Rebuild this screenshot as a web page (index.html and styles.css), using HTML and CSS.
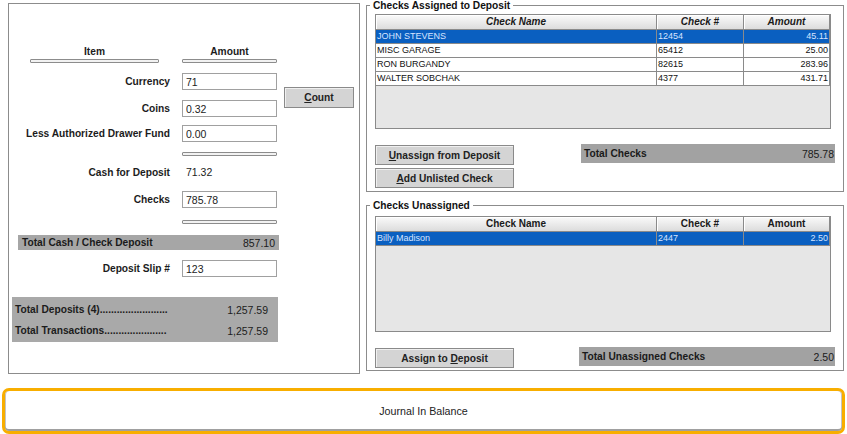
FILE: index.html
```html
<!DOCTYPE html>
<html lang="en">

<head>
    <meta charset="UTF-8">
    <title>Deposit</title>

    <link rel="stylesheet" href="styles.css">
</head>

<body>

    <div class="top">

        <div class="venstre">
            <div class="felt hoved b">
                <span class="item">Item</span>
                <span class="amount">Amount</span>
            </div>
            <div class="felt linjer">
                <div class="streg item"></div>
                <div class="streg amount"></div>
            </div>

            <div class="felt kasse">
                <span class="lbl b">Currency</span>
                <input class="inp" type="text" value="71">
                <span class="lbl b">Coins</span>
                <input class="inp" type="text" value="0.32">
                <button class="knap count"><u>C</u>ount</button>
            </div>

            <div class="felt raekke r-less">
                <span class="lbl b">Less Authorized Drawer Fund</span>
                <input class="inp" type="text" value="0.00">
            </div>
            <div class="felt linjer l2">
                <div class="streg amount"></div>
            </div>
            <div class="felt raekke r-cash">
                <span class="lbl b">Cash for Deposit</span>
                <span class="vaerdi">71.32</span>
            </div>
            <div class="felt raekke r-checks">
                <span class="lbl b">Checks</span>
                <input class="inp" type="text" value="785.78">
            </div>
            <div class="felt linjer l3">
                <div class="streg amount"></div>
            </div>

            <div class="bar total-cash">
                <span class="b">Total Cash / Check Deposit</span>
                <span>857.10</span>
            </div>

            <div class="felt raekke r-slip">
                <span class="lbl b">Deposit Slip #</span>
                <input class="inp" type="text" value="123">
            </div>

            <div class="totaler">
                <div class="tot-linje">
                    <span class="b">Total Deposits (4)........................</span>
                    <span>1,257.59</span>
                </div>
                <div class="tot-linje">
                    <span class="b">Total Transactions......................</span>
                    <span>1,257.59</span>
                </div>
            </div>
        </div>

        <div class="hoejre">
            <fieldset class="gruppe g1">
                <legend>Checks Assigned to Deposit</legend>
                <div class="tabel">
                    <table class="kursiv">
                        <colgroup>
                            <col class="c-navn">
                            <col class="c-nr">
                            <col class="c-bel">
                        </colgroup>
                        <tr>
                            <th>Check Name</th>
                            <th>Check #</th>
                            <th>Amount</th>
                        </tr>
                        <tr class="valgt">
                            <td>JOHN STEVENS</td>
                            <td>12454</td>
                            <td class="bel">45.11</td>
                        </tr>
                        <tr>
                            <td>MISC GARAGE</td>
                            <td>65412</td>
                            <td class="bel">25.00</td>
                        </tr>
                        <tr>
                            <td>RON BURGANDY</td>
                            <td>82615</td>
                            <td class="bel">283.96</td>
                        </tr>
                        <tr>
                            <td>WALTER SOBCHAK</td>
                            <td>4377</td>
                            <td class="bel">431.71</td>
                        </tr>
                    </table>
                </div>
                <div class="bund">
                    <div class="knapper">
                        <button class="knap bred"><u>U</u>nassign from Deposit</button>
                        <button class="knap bred"><u>A</u>dd Unlisted Check</button>
                    </div>
                    <div class="bar total-h">
                        <span class="b">Total Checks</span>
                        <span>785.78</span>
                    </div>
                </div>
            </fieldset>

            <fieldset class="gruppe g2">
                <legend>Checks Unassigned</legend>
                <div class="tabel t2">
                    <table>
                        <colgroup>
                            <col class="c-navn">
                            <col class="c-nr">
                            <col class="c-bel">
                        </colgroup>
                        <tr>
                            <th>Check Name</th>
                            <th>Check #</th>
                            <th>Amount</th>
                        </tr>
                        <tr class="valgt">
                            <td>Billy Madison</td>
                            <td>2447</td>
                            <td class="bel">2.50</td>
                        </tr>
                    </table>
                </div>
                <div class="bund">
                    <div class="knapper">
                        <button class="knap bred">Assign to <u>D</u>eposit</button>
                    </div>
                    <div class="bar total-h t-u">
                        <span class="b">Total Unassigned Checks</span>
                        <span>2.50</span>
                    </div>
                </div>
            </fieldset>
        </div>

    </div>

    <div class="journal">Journal In Balance</div>

</body>

</html>
```

FILE: styles.css
```css
body {
    margin: 0;
    background-color: #fff;
    font-family: "Liberation Sans", Arial, sans-serif;
    font-size: 10.5px;
    color: #1c1c1c;
}

.b {
    font-weight: bold;
    font-size: 10.2px;
}

.top {
    display: flex;
    align-items: flex-start;
    gap: 6px;
    padding-left: 8px;
}

/* venstre panel */

.venstre {
    box-sizing: border-box;
    width: 352px;
    height: 371px;
    margin-top: 3px;
    border: 1px solid #8c8c8c;
    padding-top: 42px;
}

.felt {
    display: grid;
    grid-template-columns: 161px 12px 95px 7px 70px;
    align-items: center;
}

.hoved {
    line-height: 12px;
}

.hoved .item,
.linjer .item {
    grid-column: 1;
    margin: 0 11px 0 21px;
    text-align: center;
}

.hoved .amount,
.linjer .amount {
    grid-column: 3;
    text-align: center;
}

.linjer {
    margin-top: 1px;
    height: 4px;
}

.l2 {
    margin-top: 10px;
}

.l3 {
    margin-top: 12px;
}

.streg {
    box-sizing: border-box;
    height: 4px;
    border: 1px solid #8c8c8c;
    background-color: #f2f2f2;
    border-radius: 1px;
}

.lbl {
    grid-column: 1;
    text-align: right;
    white-space: nowrap;
}

.inp {
    grid-column: 3;
    box-sizing: border-box;
    width: 95px;
    height: 17px;
    margin: 0;
    padding: 0 0 0 3px;
    border: 1px solid #a0a0a0;
    background-color: #fff;
    font-family: "Liberation Sans", Arial, sans-serif;
    font-size: 10.5px;
    color: #1c1c1c;
    outline: none;
}

.kasse {
    margin-top: 10px;
    grid-template-rows: 17px 17px;
    row-gap: 10px;
}

.knap {
    box-sizing: border-box;
    margin: 0;
    padding: 0;
    background-color: #d4d4d4;
    border: 1px solid #8a8a8a;
    box-shadow: inset 1px 1px 0 #f0f0f0;
    font-family: "Liberation Sans", Arial, sans-serif;
    font-weight: bold;
    font-size: 10.2px;
    color: #222;
    cursor: pointer;
}

.count {
    grid-column: 5;
    grid-row: 1 / span 2;
    align-self: start;
    margin-top: 14px;
    height: 21px;
}

.r-less {
    margin-top: 8px;
}

.r-cash {
    margin-top: 9px;
    height: 14px;
}

.vaerdi {
    grid-column: 3;
    padding-left: 4px;
}

.r-checks {
    margin-top: 12px;
}

.r-slip {
    margin-top: 10px;
}

.bar {
    box-sizing: border-box;
    display: flex;
    justify-content: space-between;
    align-items: center;
    background-color: #a6a6a6;
    color: #1a1a1a;
}

.total-cash {
    width: 261px;
    height: 15px;
    margin: 11px 0 0 9px;
    padding: 0 4px;
}

.totaler {
    box-sizing: border-box;
    width: 266px;
    height: 45px;
    margin: 20px 0 0 3px;
    padding: 6px 10px 4px 3px;
    background-color: #a9a9a9;
}

.tot-linje {
    display: flex;
    justify-content: space-between;
    line-height: 14px;
    white-space: nowrap;
}

.tot-linje + .tot-linje {
    margin-top: 7px;
}

/* hoejre side */

.hoejre {
    width: 478px;
    display: flex;
    flex-direction: column;
}

.gruppe {
    margin: 0;
    min-width: 0;
    border: 1px solid #8c8c8c;
    padding: 3px 8px 3px 8px;
}

.g2 {
    margin-top: 8px;
    padding-top: 5px;
    padding-bottom: 2px;
}

legend {
    margin-left: -5px;
    padding: 0 3px;
    font-weight: bold;
    font-size: 10.2px;
    line-height: 11px;
    color: #111;
}

.tabel {
    box-sizing: border-box;
    width: 456px;
    height: 115px;
    border: 1px solid #8a8a8a;
    background-color: #e6e6e6;
}

.t2 {
    height: 116px;
}

table {
    width: 100%;
    table-layout: fixed;
    border-collapse: separate;
    border-spacing: 0;
}

.c-navn {
    width: 281px;
}

.c-nr {
    width: 87px;
}

.c-bel {
    width: 86px;
}

th {
    height: 14px;
    padding: 0;
    background: linear-gradient(#fafafa, #dcdcdc);
    border-right: 1px solid #8a8a8a;
    border-bottom: 1px solid #8a8a8a;
    box-shadow: inset 1px 1px 0 #fff;
    font-size: 10px;
    line-height: 14px;
    color: #1a1a1a;
}

.kursiv th {
    font-style: italic;
}

td {
    height: 13px;
    padding: 0 1px;
    background-color: #fff;
    border-right: 1px solid #8a8a8a;
    border-bottom: 1px solid #8a8a8a;
    font-size: 9px;
    line-height: 13px;
    color: #111;
    white-space: nowrap;
}

.bel {
    text-align: right;
}

.valgt td {
    background-color: #0a5fc0;
    color: #d6e4ff;
}

.bund {
    display: flex;
    align-items: flex-start;
    margin-top: 15px;
}

.knapper {
    display: flex;
    flex-direction: column;
    gap: 3px;
    margin-top: 1px;
}

.bred {
    width: 139px;
    height: 20px;
}

.total-h {
    margin-left: auto;
    width: 254px;
    height: 19px;
    padding: 0 1px 0 3px;
    background-color: #a2a2a2;
}

.t-u {
    width: 256px;
}

/* bund linje */

.journal {
    box-sizing: border-box;
    height: 46px;
    margin: 14px 2px 0 2px;
    border: 3px solid #f8ae00;
    border-radius: 7px;
    background-color: #fff;
    box-shadow: inset 0 -2px 0 #a0a0a0, inset 1px 0 0 #c4c4c4, inset -1px 0 0 #c4c4c4;
    display: flex;
    align-items: center;
    justify-content: center;
    font-size: 10.7px;
    color: #222;
}
```
